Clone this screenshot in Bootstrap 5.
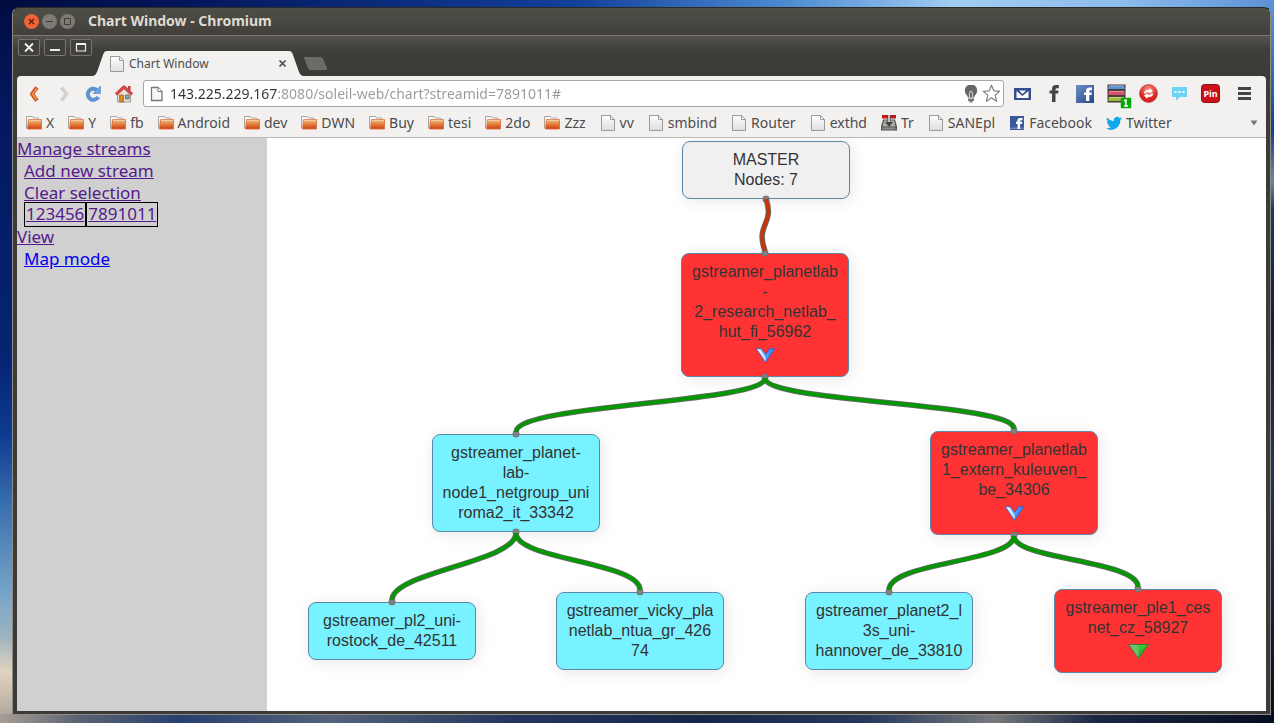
<!DOCTYPE html>
<html lang="en">
<head>
<meta charset="utf-8">
<meta name="viewport" content="width=device-width, initial-scale=1">
<title>Chart Window</title>
<link rel="stylesheet" href="https://cdn.jsdelivr.net/npm/bootstrap@5.3.0/dist/css/bootstrap.min.css">
<style>
  :root { --ui: "Noto Sans", "Open Sans", sans-serif; }
  body {
    font-family: var(--ui);
    min-height: 100vh;
    padding: 7px 3px 8px 12px;
    background:
      linear-gradient(90deg, #010c3e 0, #04175c 15%, #12409a 45%, #4f8cd2 62%, #a2cdf3 75%, #8dbdec 88%, #5b92d6 100%) top / 100% 8px no-repeat,
      linear-gradient(90deg, #a79f96 0, #5c6473 6%, #28406f 14%, #54627a 26%, #24365f 40%, #15264a 55%, #25395c 68%, #77797c 78%, #1a2744 86%, #050d20 100%) bottom / 100% 9px no-repeat,
      linear-gradient(180deg, #020b42 0, #04185f 15%, #062473 50%, #0d3b91 60%, #3a70b0 70%, #76a5c8 82%, #9db3bf 88%, #e2d3bf 93%, #a79f96 100%) left / 14px 100% no-repeat,
      linear-gradient(180deg, #5f97da 0, #2b60b0 12%, #10408d 18%, #6c85a8 25%, #1c3768 29%, #101b40 45%, #22345e 65%, #050d20 100%) right / 5px 100% no-repeat,
      #0a1a44;
  }
  svg { display: block; flex: none; }
  button { border: 0; background: none; padding: 0; flex: none; }
  .app-window {
    min-height: calc(100vh - 15px);
    background: #3c3b37;
    border: 1px solid #8f8c86;
    border-top-color: #2b2a27;
    border-radius: 7px 7px 0 0;
    overflow: hidden;
  }
  .title-bar {
    height: 27px;
    padding-left: 11px;
    gap: 3px;
    background: linear-gradient(#504f47, #403f3a);
    color: #dfdbd2;
  }
  .title-bar h1 { font-size: 14px; font-weight: 700; margin: 0 0 0 10px; }
  .tab-strip {
    height: 41px;
    padding-left: 5px;
    border-top: 1px solid #7c7a73;
    background: linear-gradient(#55534d, #3f3e39 14px, #3c3b37);
  }
  .frame-btns { gap: 4px; padding-top: 3px; }
  .frame-btns button { width: 22px; height: 17px; border: 1px solid #77756e; border-radius: 2px; background: #403f3b; }
  .page-tab { width: 210px; height: 25px; margin-left: 1px; font-size: 12px; color: #4c4c4c; padding: 0 16px 0 16px; gap: 4px; }
  .tab-shape { position: absolute; inset: 0; }
  .page-tab > :not(.tab-shape) { position: relative; }
  .frame-body { margin: 0 4px 3px; }
  .tool-area { background: #f2f1f0; border-bottom: 1px solid #bdbab6; border-radius: 4px 4px 0 0; height: 62px; }
  .nav-row { height: 35px; padding: 0 14px 0 7px; }
  .nav-btns { gap: 10px; width: 119px; }
  .url-box { height: 27px; border: 1px solid #aaa6a1; border-radius: 3px; background: #fff; padding: 0 2px 0 6px; gap: 2px; }
  .url-box input {
    border: 0; outline: 0; padding: 0 0 0 4px; min-width: 0; font-size: 14px; line-height: 24px; height: 25px;
    color: transparent; caret-color: #333;
    background: linear-gradient(90deg, #333 112px, #999 112px);
    -webkit-background-clip: text; background-clip: text;
  }
  .ext-row { gap: 13px; padding-left: 9px; }
  .bookmarks { height: 24px; padding: 0 8px 0 9px; gap: 14px; font-size: 14px; line-height: 24px; }
  .bookmarks a { color: #4c4c4c; text-decoration: none; gap: 4px; white-space: nowrap; }
  .side-panel { width: 250px; background: #d0d0d0; font-size: 17px; line-height: 22px; }
  .side-panel a { color: #551a8b; }
  .side-panel a.fresh { color: #0000ee; }
  .side-panel .sub-links { padding-left: 7px; }
  .stream-box { border: 1px solid #000; height: 25px; margin: -2px 0 -1px; padding: 0 1px; }
  .chart { background: #fff; min-height: 573px; overflow: hidden; }
  .wires { position: absolute; left: 0; top: 0; pointer-events: none; }
  .chart-node {
    position: absolute; width: 168px; padding: 8px 0; text-align: center;
    font: 16px/20px "Liberation Sans", Arial, sans-serif; color: #333;
    border: 1px solid #5b87a8; border-radius: 8px; background: #78f2ff;
    box-shadow: 2px 2px 16px rgba(0, 0, 0, .1);
  }
  .chart-node.hot { background: #f33; }
  .chart-node.root { background: #f0f0f0; }
  .chart-node svg { margin: 6px auto 5px; }
</style>
<script src="https://cdn.jsdelivr.net/npm/bootstrap@5.3.0/dist/js/bootstrap.bundle.min.js" defer></script>
</head>
<body>
<svg width="0" height="0" class="position-absolute" aria-hidden="true">
  <defs>
    <linearGradient id="gOrange" x2="0" y2="1"><stop stop-color="#f3c28c"/><stop offset=".5" stop-color="#e37f3c"/><stop offset="1" stop-color="#cf3c12"/></linearGradient>
    <linearGradient id="gPage" x2="0" y2="1"><stop stop-color="#fff"/><stop offset="1" stop-color="#dedede"/></linearGradient>
    <linearGradient id="gBlue" x2="1" y2="0"><stop stop-color="#e6f2ff"/><stop offset=".45" stop-color="#8cc4ff"/><stop offset=".55" stop-color="#4a94ff"/><stop offset="1" stop-color="#3a86f8"/></linearGradient>
    <linearGradient id="gFb" x2="1" y2="1"><stop stop-color="#6f8fc4"/><stop offset="1" stop-color="#23468c"/></linearGradient>
    <radialGradient id="gRed" cy=".3"><stop stop-color="#ff9a8c"/><stop offset="1" stop-color="#d62222"/></radialGradient>
    <symbol id="folder" viewBox="0 0 16 16"><path d="M.5 13.500V1.500H6.500L7.500 3H12.500V5" fill="#fbfaf9" stroke="#a9a5a0"/><path d="M2.500 4.500h13v9.500h-14z" fill="url(#gOrange)" stroke="#d86a3a" stroke-width=".8"/><path d="M3 5.300h12" stroke="#f8d9b4" stroke-width=".8"/></symbol>
    <symbol id="sheet" viewBox="0 0 16 16"><path d="M1.500.5h9l4 4v11h-13z" fill="url(#gPage)" stroke="#9b9b9b"/><path d="M10.500.5v4h4z" fill="#fff" stroke="#9b9b9b"/></symbol>
    <symbol id="chevron" viewBox="0 0 21 16"><path d="M.7.7H6L10.500 7 15 .7H20.300L10.500 15.300z" fill="url(#gBlue)" stroke="#2760c8" stroke-width=".9"/><path d="M2 1.300L10.500 14V11L4 1.300z" fill="#fff" opacity=".6"/></symbol>
  </defs>
</svg>

<div class="app-window d-flex flex-column">
  <header class="title-bar d-flex align-items-center">
    <button type="button" aria-label="Close window"><svg width="15" height="15" viewBox="0 0 15 15"><circle cx="7.500" cy="7.500" r="7.500" fill="#ee6339"/><path d="M5 5l5 5M10 5l-5 5" stroke="#5a1e0c" stroke-width="1.300"/></svg></button>
    <button type="button" aria-label="Minimise window"><svg width="15" height="15" viewBox="0 0 15 15"><circle cx="7.500" cy="7.500" r="7.500" fill="#7d7b73"/><path d="M4 7.500h7" stroke="#3c3b37"/></svg></button>
    <button type="button" aria-label="Maximise window"><svg width="15" height="15" viewBox="0 0 15 15"><circle cx="7.500" cy="7.500" r="7.500" fill="#7d7b73"/><path d="M4.500 4.500h6v6h-6z" fill="none" stroke="#3c3b37"/></svg></button>
    <h1>Chart Window - Chromium</h1>
  </header>

  <div class="tab-strip d-flex align-items-start">
    <div class="frame-btns d-flex">
      <button type="button" aria-label="Close"><svg width="20" height="15" viewBox="0 0 20 15"><path d="M6 3.500l8 8M14 3.500l-8 8" stroke="#eee" stroke-width="1.800"/></svg></button>
      <button type="button" aria-label="Minimise"><svg width="20" height="15" viewBox="0 0 20 15"><path d="M5 10h10" stroke="#eee" stroke-width="2"/></svg></button>
      <button type="button" aria-label="Maximise"><svg width="20" height="15" viewBox="0 0 20 15"><path d="M5.500 4h9v7h-9z" fill="none" stroke="#eee" stroke-width="1.200"/><path d="M5 4h10" stroke="#eee" stroke-width="2"/></svg></button>
    </div>
    <div class="page-tab position-relative d-flex align-items-center align-self-end">
      <svg class="tab-shape" width="210" height="25" viewBox="0 0 210 25" aria-hidden="true"><path d="M0 25Q3 24 4 21L10 4Q11 0 14 0H196Q199 0 200 4L206 21Q207 24 210 25z" fill="#f2f1f0"/></svg>
      <svg width="16" height="16"><use href="#sheet"/></svg>
      <span class="flex-grow-1">Chart Window</span>
      <button type="button" aria-label="Close tab"><svg width="9" height="9" viewBox="0 0 9 9"><path d="M1.500 1.500l6 6M7.500 1.500l-6 6" stroke="#4c4c4c" stroke-width="1.700"/></svg></button>
    </div>
    <button type="button" class="align-self-end mb-1" aria-label="New tab"><svg width="26" height="16" viewBox="0 0 26 16"><path d="M1 .5H17Q19.500.5 20.500 3L24.500 12Q25 14.500 22.500 14.500H8Q5.500 14.500 4.500 12L.5 2Q0 .5 1 .5z" fill="#6d6b66" stroke="#2f2e2b" stroke-width=".6"/></svg></button>
  </div>

  <div class="frame-body d-flex flex-column flex-grow-1">
    <div class="tool-area">
      <div class="nav-row d-flex align-items-center">
        <div class="nav-btns d-flex align-items-center flex-shrink-0">
          <button type="button" aria-label="Back"><svg width="20" height="20" viewBox="0 0 20 20"><path d="M13 3.500L8 10l5 6.500" fill="none" stroke="#c9501c" stroke-width="4" stroke-linejoin="round"/><path d="M12.800 4.500L8.300 10l4.500 5.500" fill="none" stroke="#f08a4a" stroke-width="2"/></svg></button>
          <button type="button" aria-label="Forward"><svg width="20" height="20" viewBox="0 0 20 20"><path d="M7.500 3.500l5 6.500-5 6.500" fill="none" stroke="#d3d0cd" stroke-width="3.500"/></svg></button>
          <button type="button" aria-label="Reload"><svg width="20" height="20" viewBox="0 0 20 20"><path d="M14.300 13A5.600 5.600 0 1 1 12.800 5.800" fill="none" stroke="#5e95d0" stroke-width="4"/><path d="M16.500 2v7.500h-7.500z" fill="#6ea4dc" stroke="#4b83c2" stroke-width=".6"/></svg></button>
          <button type="button" aria-label="Home"><svg width="20" height="20" viewBox="0 0 20 20"><path d="M3.500 9.500v8.500h13V9.500L10 3.500z" fill="#e8e3d8" stroke="#8a857a" stroke-width=".8"/><path d="M14 2h2.500v5H14z" fill="#b84438"/><path d="M2 10.500L10 3l8 7.500" fill="none" stroke="#cf4a48" stroke-width="3.200" stroke-linejoin="round"/><path d="M5.500 11h4v7h-4z" fill="#d88a1c" stroke="#8f5a10" stroke-width=".6"/><path d="M11.500 11h3.500v4h-3.500z" fill="#8fa6bf" stroke="#55534d" stroke-width=".7"/></svg></button>
        </div>
        <div class="url-box d-flex align-items-center flex-grow-1">
          <svg width="14" height="16" viewBox="0 0 14 16"><path d="M1.500 1.500h6.500l4 4v9h-10.500z" fill="#f6f6f6" stroke="#777" stroke-width="1.300"/><path d="M8 1.500v4h4" fill="#fff" stroke="#777"/></svg>
          <input class="flex-grow-1" type="text" aria-label="Address" value="143.225.229.167:8080/soleil-web/chart?streamid=7891011#">
          <svg width="18" height="18" viewBox="0 0 18 18"><path d="M5.800 12.500Q5.800 11 4.200 9.500A6.200 6.200 0 1 1 13.800 9.500Q12.200 11 12.200 12.500z" fill="#666"/><path d="M7.500 12V8Q9 4 10.500 8v4" fill="none" stroke="#ccc" stroke-width="1.100"/><path d="M6 13.500h6v2.500H6zM7.500 16h3v1.500h-3z" fill="#777"/></svg>
          <button type="button" aria-label="Bookmark this page"><svg width="19" height="19" viewBox="0 0 19 19"><path d="M9.500 1.200l2.300 5.700 6 .3-4.700 3.900 1.600 6.300-5.200-3.600-5.200 3.600 1.600-6.300L1.200 7.200l6-.3z" fill="#fff" stroke="#777" stroke-width="1.100" stroke-linejoin="round"/></svg></button>
        </div>
        <div class="ext-row d-flex align-items-center flex-shrink-0">
          <button type="button" aria-label="Mail"><svg width="19" height="19" viewBox="0 0 19 19"><path d="M1 4h17v12H1z" fill="#354f8c"/><path d="M3.500 7l6 5 6-5v7h-12z" fill="#fff"/><path d="M6 6.500h7L9.500 10z" fill="#fff"/></svg></button>
          <button type="button" aria-label="Share"><svg width="18" height="19" viewBox="0 0 18 19"><path d="M7 18V9.500H4.500V6.500H7V5Q7 1 11 1h2.800v3.200H12Q10.500 4.200 10.500 5.500v1h3l-.4 3h-2.600V18z" fill="#444"/></svg></button>
          <button type="button" aria-label="Facebook extension"><svg width="18" height="18" viewBox="0 0 18 18"><path d="M0 0h18v18H0z" fill="url(#gFb)"/><path d="M10 16V10H8V7.500h2V6q0-3.500 3.500-3.500H16V5.200h-1.500q-1.200 0-1.200 1.100v1.200h2.600L15.500 10h-2.200v6z" fill="#fff"/></svg></button>
          <button type="button" class="position-relative" aria-label="Stack, 1 item"><svg width="19" height="19" viewBox="0 0 19 19"><path d="M.5.5h18v18H.5z" fill="#4a3a36"/><path d="M2 1.500h15l1 3.500H1z" fill="#5a92d0"/><path d="M2 7h15l1 4H1z" fill="#d4506c"/><path d="M2 13h15l1 4H1z" fill="#9dbb3c"/><path d="M2 1.900h15M2 7.400h15M2 13.400h15" stroke="#fff" stroke-opacity=".5" stroke-width=".8"/></svg>
            <svg class="position-absolute start-100 top-100 translate-middle" width="11" height="11" viewBox="0 0 11 11"><rect width="11" height="11" rx="1.500" fill="#0a0"/><path d="M3.500 3.500l2-1v6M3.500 8.500h4" fill="none" stroke="#fff" stroke-width="1.500"/></svg></button>
          <button type="button" aria-label="Sync"><svg width="19" height="19" viewBox="0 0 19 19"><circle cx="9.500" cy="9.500" r="9" fill="url(#gRed)" stroke="#c84a44" stroke-width=".8"/><path d="M5 9.500Q5 6 9 6h1.500V4L14 7.300l-3.500 2.500V8.300H9Q7 8.300 6.500 9.500z" fill="#fff"/><path d="M14 9.500q0 3.500-4 3.500H8.500v2L5 11.700l3.500-2.500v1.500H10q2 0 2.500-1.200z" fill="#fff"/></svg></button>
          <button type="button" aria-label="Chat"><svg width="17" height="17" viewBox="0 0 17 17"><path d="M1 2h15v10H9l-4 3.500V12H1z" fill="#6ed2f2"/><path d="M3.500 6h2v2h-2zM7.500 6h2v2h-2zM11.500 6h2v2h-2z" fill="#fff"/></svg></button>
          <button type="button" aria-label="Pin it"><svg width="19" height="19" viewBox="0 0 19 19"><rect x=".5" y=".5" width="18" height="18" rx="3" fill="#cb1017" stroke="#8e1015"/><text x="9.500" y="13" text-anchor="middle" fill="#fff" font-family="Noto Sans, sans-serif" font-weight="700" font-size="9">Pin</text></svg></button>
          <button type="button" class="ms-1" aria-label="Menu"><svg width="15" height="15" viewBox="0 0 15 15"><path d="M1 2.500h13M1 7.500h13M1 12.500h13" stroke="#444" stroke-width="2.800"/></svg></button>
        </div>
      </div>
      <nav class="bookmarks d-flex align-items-center" aria-label="Bookmarks">
        <a class="d-flex align-items-center" href="#"><svg width="16" height="16"><use href="#folder"/></svg>X</a>
        <a class="d-flex align-items-center" href="#"><svg width="16" height="16"><use href="#folder"/></svg>Y</a>
        <a class="d-flex align-items-center" href="#"><svg width="16" height="16"><use href="#folder"/></svg>fb</a>
        <a class="d-flex align-items-center" href="#"><svg width="16" height="16"><use href="#folder"/></svg>Android</a>
        <a class="d-flex align-items-center" href="#"><svg width="16" height="16"><use href="#folder"/></svg>dev</a>
        <a class="d-flex align-items-center" href="#"><svg width="16" height="16"><use href="#folder"/></svg>DWN</a>
        <a class="d-flex align-items-center" href="#"><svg width="16" height="16"><use href="#folder"/></svg>Buy</a>
        <a class="d-flex align-items-center" href="#"><svg width="16" height="16"><use href="#folder"/></svg>tesi</a>
        <a class="d-flex align-items-center" href="#"><svg width="16" height="16"><use href="#folder"/></svg>2do</a>
        <a class="d-flex align-items-center" href="#"><svg width="16" height="16"><use href="#folder"/></svg>Zzz</a>
        <a class="d-flex align-items-center" href="#"><svg width="16" height="16"><use href="#sheet"/></svg>vv</a>
        <a class="d-flex align-items-center" href="#"><svg width="16" height="16"><use href="#sheet"/></svg>smbind</a>
        <a class="d-flex align-items-center" href="#"><svg width="16" height="16"><use href="#sheet"/></svg>Router</a>
        <a class="d-flex align-items-center" href="#"><svg width="16" height="16"><use href="#sheet"/></svg>exthd</a>
        <a class="d-flex align-items-center" href="#"><svg width="16" height="16" viewBox="0 0 16 16"><path d="M2 4.500h12l2 7v4H0v-4z" fill="#555"/><path d="M3 5.500h10l1.500 6h-13z" fill="#aab0a8"/><path d="M1.500 12.500h13v2h-13z" fill="#8a8f88"/><path d="M1 0h14v3.500H1z" fill="#c01818"/><path d="M6.500 0h3v7h2.500L8 12 4 7h2.500z" fill="#444"/><path d="M7.200 0h1.600v7H7.200z" fill="#ddd"/></svg>Tr</a>
        <a class="d-flex align-items-center" href="#"><svg width="16" height="16"><use href="#sheet"/></svg>SANEpl</a>
        <a class="d-flex align-items-center" href="#"><svg width="16" height="16" viewBox="0 0 16 16"><path d="M1 1h14v14H1z" fill="#3b5998"/><path d="M1 12.500h14V14H1z" fill="#6d84b4"/><path d="M8.500 14V9H7V6.500h1.500V5.500Q8.500 3 11 3h2.500v2.300H12q-.9 0-.9.9v.5h2.200L13 9h-1.900v5z" fill="#fff"/></svg>Facebook</a>
        <a class="d-flex align-items-center" href="#"><svg width="16" height="16" viewBox="0 0 16 16"><path d="M16 3.500a6 6 0 0 1-1.800.5 3 3 0 0 0 1.300-1.700 6 6 0 0 1-2 .7 3.200 3.200 0 0 0-5.500 3A9.500 9.500 0 0 1 1.200 2.500 3.300 3.300 0 0 0 2.200 6.800 3 3 0 0 1 .8 6.500 3.300 3.300 0 0 0 3.400 9.700a3 3 0 0 1-1.500.1 3.300 3.300 0 0 0 3 2.200A6.500 6.500 0 0 1 0 13.300 9.300 9.300 0 0 0 14.300 5.100 6 6 0 0 0 16 3.500z" fill="#12a9ea"/></svg>Twitter</a>
        <button type="button" class="ms-auto" aria-label="More bookmarks"><svg width="8" height="6" viewBox="0 0 8 6"><path d="M.5.5h7L4 5.500z" fill="#777"/></svg></button>
      </nav>
    </div>

    <div class="d-flex flex-grow-1">
      <aside class="side-panel flex-shrink-0">
        <a href="#">Manage streams</a>
        <div class="sub-links">
          <div><a href="#">Add new stream</a></div>
          <div><a href="#">Clear selection</a></div>
          <div class="d-flex"><div class="stream-box"><a href="#">123456</a></div><div class="stream-box"><a href="#">7891011</a></div></div>
        </div>
        <a href="#">View</a>
        <div class="sub-links"><a class="fresh" href="#">Map mode</a></div>
      </aside>

      <main class="chart position-relative flex-grow-1">
        <div class="chart-node root" style="left:415px;top:3px">MASTER<br>Nodes: 7</div>
        <div class="chart-node hot" style="left:414px;top:115px">gstreamer_planetlab<br>-<br>2_research_netlab_<br>hut_fi_56962<svg width="21" height="15"><use href="#chevron"/></svg></div>
        <div class="chart-node" style="left:165px;top:296px">gstreamer_planet-<br>lab-<br>node1_netgroup_uni<br>roma2_it_33342</div>
        <div class="chart-node hot" style="left:663px;top:293px">gstreamer_planetlab<br>1_extern_kuleuven_<br>be_34306<svg width="21" height="15"><use href="#chevron"/></svg></div>
        <div class="chart-node" style="left:41px;top:464px">gstreamer_pl2_uni-<br>rostock_de_42511</div>
        <div class="chart-node" style="left:289px;top:454px">gstreamer_vicky_pla<br>netlab_ntua_gr_426<br>74</div>
        <div class="chart-node" style="left:538px;top:454px">gstreamer_planet2_l<br>3s_uni-<br>hannover_de_33810</div>
        <div class="chart-node hot" style="left:787px;top:451px">gstreamer_ple1_ces<br>net_cz_58927<svg width="21" height="15" viewBox="0 0 21 15"><path d="M.5.5h20L10.500 14.500z" fill="#3aa63a" stroke="#2d7a2d" stroke-width=".8"/><path d="M1.500 1h9v13z" fill="#8cc88c" opacity=".7"/><path d="M10.500 1h9l-9 7z" fill="#28d428"/></svg></div>

        <svg class="wires" width="999" height="573" viewBox="267 138 999 573" fill="none" aria-hidden="true">
          <g fill="#808080" stroke="#666" stroke-width=".6">
            <rect x="763" y="196" width="6" height="6" rx="2"/><rect x="762" y="250" width="6" height="6" rx="2"/><rect x="762" y="374" width="6" height="6" rx="2"/>
            <rect x="513" y="431" width="6" height="6" rx="2"/><rect x="513" y="529" width="6" height="6" rx="2"/><rect x="1011" y="428" width="6" height="6" rx="2"/><rect x="1011" y="532" width="6" height="6" rx="2"/>
            <rect x="389" y="599" width="6" height="6" rx="2"/><rect x="637" y="589" width="6" height="6" rx="2"/><rect x="886" y="589" width="6" height="6" rx="2"/><rect x="1135" y="586" width="6" height="6" rx="2"/>
          </g>
          <path d="M766 199C775 225 755 223 765 251" stroke="#666" stroke-width="5.500"/>
          <path d="M766 199C775 225 755 223 765 251" stroke="#c30" stroke-width="3.500"/>
          <path d="M765 378C765 403 516 404 516 432M765 378C765 403 1014 402 1014 429M516 533C516 562 392 572 392 600M516 533C516 560 640 562 640 590M1014 536C1014 562 889 562 889 590M1014 536C1014 560 1138 560 1138 587" stroke="#5f6b5f" stroke-width="5.500"/>
          <path d="M765 378C765 403 516 404 516 432M765 378C765 403 1014 402 1014 429M516 533C516 562 392 572 392 600M516 533C516 560 640 562 640 590M1014 536C1014 562 889 562 889 590M1014 536C1014 560 1138 560 1138 587" stroke="#090" stroke-width="3.500"/>
        </svg>
      </main>
    </div>
  </div>
</div>
</body>
</html>
